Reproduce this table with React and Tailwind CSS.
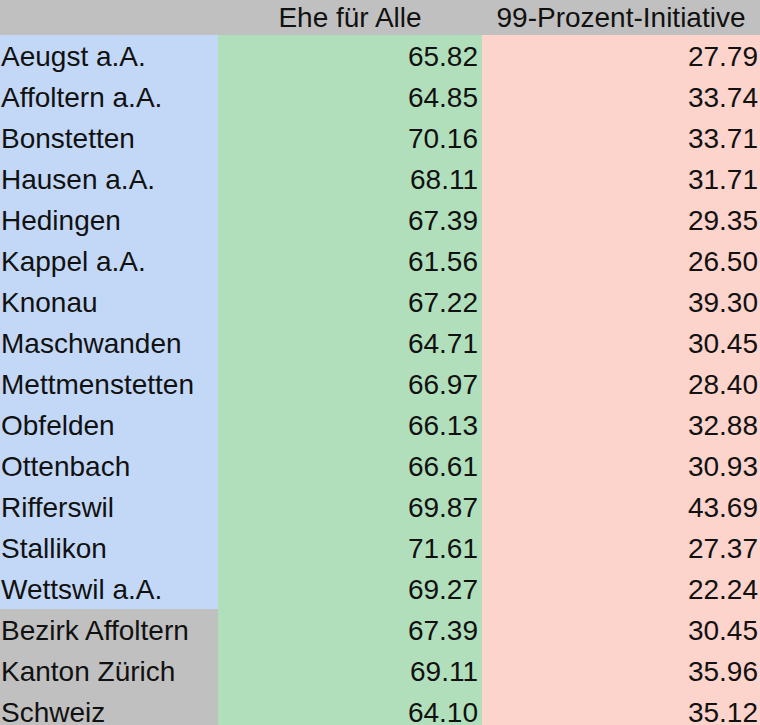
const rows = [
  ["Aeugst a.A.", "65.82", "27.79"],
  ["Affoltern a.A.", "64.85", "33.74"],
  ["Bonstetten", "70.16", "33.71"],
  ["Hausen a.A.", "68.11", "31.71"],
  ["Hedingen", "67.39", "29.35"],
  ["Kappel a.A.", "61.56", "26.50"],
  ["Knonau", "67.22", "39.30"],
  ["Maschwanden", "64.71", "30.45"],
  ["Mettmenstetten", "66.97", "28.40"],
  ["Obfelden", "66.13", "32.88"],
  ["Ottenbach", "66.61", "30.93"],
  ["Rifferswil", "69.87", "43.69"],
  ["Stallikon", "71.61", "27.37"],
  ["Wettswil a.A.", "69.27", "22.24"],
  ["Bezirk Affoltern", "67.39", "30.45", true],
  ["Kanton Zürich", "69.11", "35.96", true],
  ["Schweiz", "64.10", "35.12", true],
];

export default function App() {
  return (
    <div
      className="w-[760px] h-[725px] overflow-hidden bg-white text-[28px] text-[#111]"
      style={{ fontFamily: '"Liberation Sans", Arial, sans-serif' }}
    >
      <div className="flex h-[35px] bg-[#c0c0c0] items-center">
        <div className="w-[218px]" />
        <div className="w-[264px] text-center">Ehe für Alle</div>
        <div className="w-[278px] text-center">99-Prozent-Initiative</div>
      </div>
      {rows.map(([name, ehe, proz, total]) => (
        <div key={name} className="flex h-[41px]">
          <div
            className={`w-[218px] pl-px pt-[3px] flex items-center ${
              total ? "bg-[#c0c0c0]" : "bg-[#c3d8f7]"
            }`}
          >
            {name}
          </div>
          <div className="w-[264px] bg-[#b2dfbb] pr-[4px] pt-[3px] flex items-center justify-end">
            {ehe}
          </div>
          <div className="w-[278px] bg-[#fdd4cc] pr-[2px] pt-[3px] flex items-center justify-end">
            {proz}
          </div>
        </div>
      ))}
    </div>
  );
}
